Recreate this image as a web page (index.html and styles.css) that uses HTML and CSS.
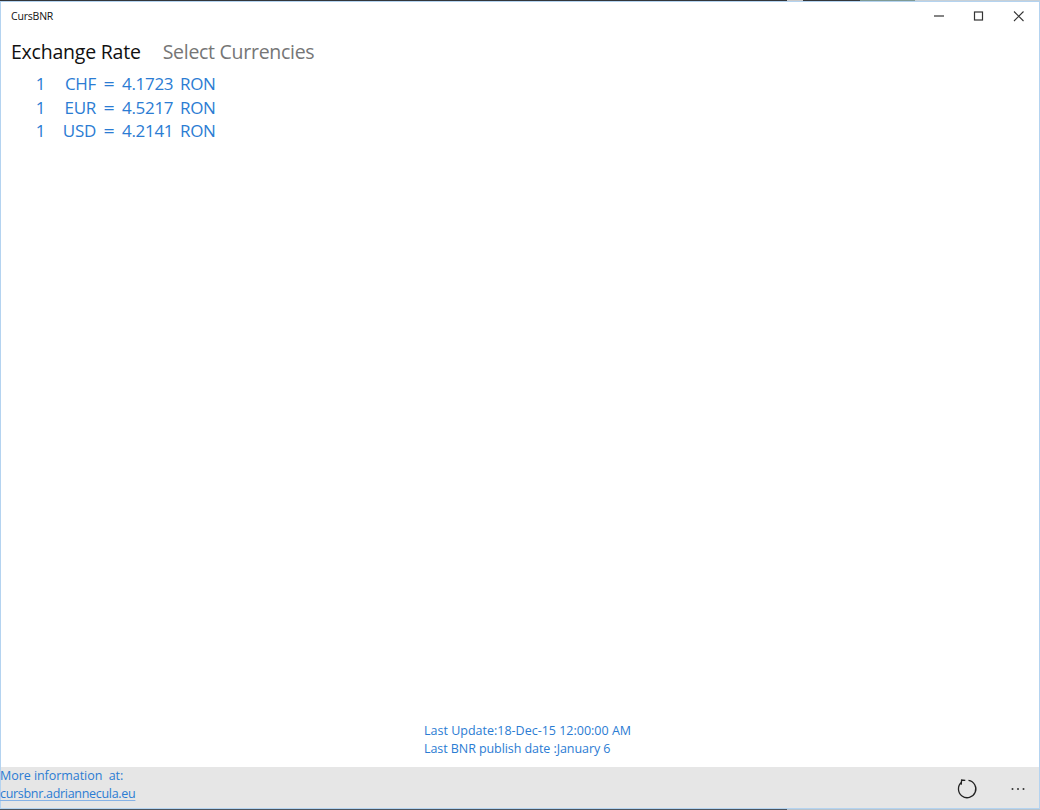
FILE: index.html
```html
<!DOCTYPE html>
<html lang="en">
<head>
<meta charset="utf-8">
<title>CursBNR</title>
<link rel="stylesheet" href="styles.css">
</head>
<body>
<div class="desktop-top"></div>
<div class="window">
  <header class="titlebar">
    <span class="app-name">CursBNR</span>
    <div class="controls">
      <svg class="ctl" width="40" height="28" viewBox="0 0 40 28"><path d="M15 14h10" stroke="#333" stroke-width="1.200"/></svg>
      <svg class="ctl" width="40" height="28" viewBox="0 0 40 28"><rect x="15.500" y="10" width="8" height="8" fill="none" stroke="#333" stroke-width="1.200"/></svg>
      <svg class="ctl" width="40" height="28" viewBox="0 0 40 28"><path d="M15 9.500l9.500 9.500M24.500 9.500L15 19" stroke="#333" stroke-width="1.100"/></svg>
    </div>
  </header>
  <nav class="pivot">
    <span class="pivot-item active">Exchange Rate</span>
    <span class="pivot-item select">Select Currencies</span>
  </nav>
  <main class="rates">
    <div class="rate"><span class="qty">1</span><span class="code">CHF</span><span class="eq">=</span><span class="val">4.1723</span><span class="ron">RON</span></div>
    <div class="rate"><span class="qty">1</span><span class="code">EUR</span><span class="eq">=</span><span class="val">4.5217</span><span class="ron">RON</span></div>
    <div class="rate"><span class="qty">1</span><span class="code">USD</span><span class="eq">=</span><span class="val">4.2141</span><span class="ron">RON</span></div>
  </main>
  <section class="status">
    <div>Last Update:18-Dec-15 12:00:00 AM</div>
    <div class="published">Last BNR publish date :January 6</div>
  </section>
  <footer class="appbar">
    <div class="info">
      <div class="more">More information&nbsp; at:</div>
      <a class="link" href="#">cursbnr.adriannecula.eu</a>
    </div>
    <div class="actions">
      <svg width="22" height="22" viewBox="0 0 22 22"><path d="M5.600 4.300A8.700 8.700 0 1 0 12.500 2.400" fill="none" stroke="#222" stroke-width="1.300"/><path d="M9.300 2.300L5.600 2 5.200 6.800" fill="none" stroke="#222" stroke-width="1.300"/></svg>
      <svg width="14" height="4" viewBox="0 0 14 4"><circle cx="1.500" cy="2" r="1" fill="#333"/><circle cx="7" cy="2" r="1" fill="#333"/><circle cx="12.500" cy="2" r="1" fill="#333"/></svg>
    </div>
  </footer>
</div>
<div class="desktop-bottom"></div>
</body>
</html>
```
FILE: styles.css
```css
* { box-sizing: border-box; }
html, body { margin: 0; height: 810px; overflow: hidden; }
body {
  display: flex;
  flex-direction: column;
  background: #fff;
  font-family: "Open Sans", "Noto Sans", sans-serif;
  color: #2b7cd3;
}
.desktop-top {
  height: 1px;
  flex: none;
  background: linear-gradient(90deg, #33363a 0 787px, #c9c9c9 787px 803px, #33363a 803px 860px, #7f9a95 860px 915px, #c8d0d6 915px);
}
.desktop-bottom {
  height: 1px;
  flex: none;
  background: linear-gradient(90deg, #4b555f 0 787px, #b7c3cc 787px);
}
.window {
  flex: 1;
  display: flex;
  flex-direction: column;
  border: 1px solid #b4d3f0;
  min-height: 0;
}
.titlebar {
  height: 28px;
  flex: none;
  display: flex;
  align-items: center;
  justify-content: space-between;
  padding-left: 10px;
}
.app-name { font-size: 10.500px; color: #111; letter-spacing: -0.2px; }
.controls { display: flex; }
.ctl { display: block; }
.pivot {
  display: flex;
  gap: 22px;
  padding: 6px 0 0 10px;
  height: 40px;
  flex: none;
  font-size: 19.500px;
  letter-spacing: -0.22px;
  line-height: 32px;
  color: #767676;
}
.pivot-item.active { color: #111; }
.pivot-item.select { letter-spacing: -0.28px; }
.rates { flex: 1; padding: 2px 0 0 20px; font-size: 17px; letter-spacing: -0.3px; }
.rate {
  display: grid;
  grid-template-columns: 39px 36px 26px 58px 50px;
  height: 23.500px;
  line-height: 23.500px;
}
.qty { text-align: center; }
.code { text-align: right; }
.eq { text-align: center; transform: scaleX(1.150); }
.status {
  flex: none;
  padding-left: 423px;
  font-size: 12.500px;
  line-height: 18px;
  padding-bottom: 9px;
}
.published { letter-spacing: -0.07px; }
.appbar {
  height: 41px;
  flex: none;
  background: #e6e6e6;
  display: flex;
  justify-content: space-between;
  align-items: flex-start;
  font-size: 12.500px;
  line-height: 18px;
}
.info { margin-left: -1px; }
.more { letter-spacing: -0.05px; }
.link {
  color: #2b7cd3;
  letter-spacing: -0.3px;
  text-decoration: underline;
  text-decoration-color: #85b2e6;
  text-underline-offset: 2px;
}
.actions { display: flex; align-items: center; gap: 33px; padding: 4px 14px 0 0; height: 40px; }
```
